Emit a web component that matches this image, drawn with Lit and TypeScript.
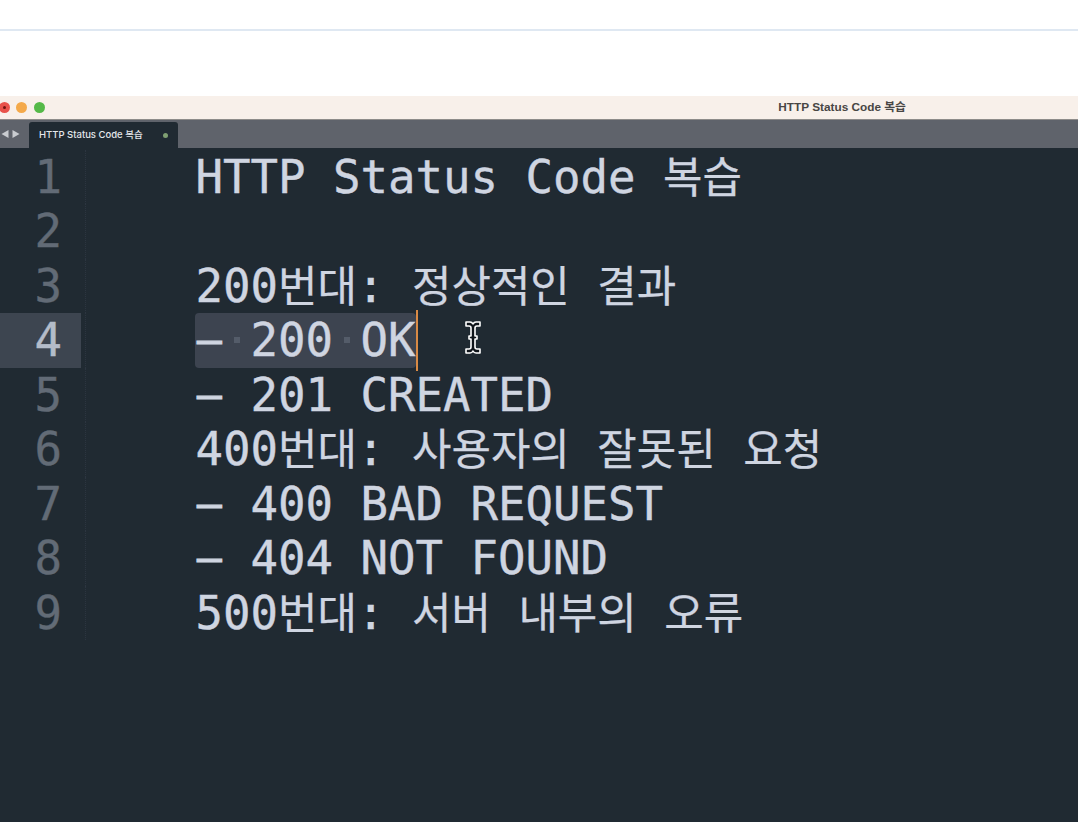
import { LitElement, html, css } from "lit";
import { customElement } from "lit/decorators.js";

const LINES = [
  "HTTP Status Code 복습",
  "",
  "200번대: 정상적인 결과",
  "",
  "– 201 CREATED",
  "400번대: 사용자의 잘못된 요청",
  "– 400 BAD REQUEST",
  "– 404 NOT FOUND",
  "500번대: 서버 내부의 오류",
];

const dash = html`<span class="dash">–</span>`;

function styled(text: string) {
  const isList = text.startsWith("– ");
  const body = isList ? text.slice(1) : text;
  return html`${isList ? dash : ""}${body.split(/([\uac00-\ud7a3]+)/).map((part, i) =>
    i % 2 ? html`<span class="ko">${part}</span>` : part
  )}`;
}

@customElement("app-root")
export class AppRoot extends LitElement {
  static styles = css`
    :host { display: block; width: 1078px; height: 822px; overflow: hidden; background: #fff; position: relative; }
    .topbar { height: 29px; border-bottom: 2px solid #dfe8f2; }
    .gap { height: 65px; }
    .title { height: 24px; background: #f8f0ea; display: flex; align-items: center; border-bottom: 1px solid #8e8c8a; box-sizing: border-box; }
    .light { width: 11px; height: 11px; border-radius: 50%; flex: none; margin-right: 6.6px; }
    .red { background: #e8524a; margin-left: -1.5px; display: flex; align-items: center; justify-content: center; }
    .red::after { content: ""; width: 3px; height: 3px; border-radius: 50%; background: #6e1410; }
    .orange { background: #f4a94a; }
    .green { background: #55b948; }
    .name { margin-left: 727px; font: 700 11.8px/1 "Liberation Sans", "Noto Sans CJK KR", sans-serif; color: #484644; white-space: nowrap; }
    .tabs { height: 28px; background: #5f636b; display: flex; align-items: flex-end; }
    .arrows { width: 29px; height: 100%; display: flex; align-items: center; gap: 3px; padding-left: 1px; box-sizing: border-box; }
    .tab { width: 149px; height: 26px; background: #202a32; border-radius: 3px 3px 0 0; display: flex; align-items: center; box-sizing: border-box; padding: 0 10px; color: #e4e7eb; font: 500 9.5px/1 Inter, "Noto Sans CJK KR", sans-serif; white-space: nowrap; }
    .dot { width: 5px; height: 5px; border-radius: 50%; background: #7f9f72; margin-left: auto; }
    .editor { height: 674px; background: #202a32; padding-top: 1.5px; box-sizing: border-box; font: 45.7px/56px "DejaVu Sans Mono", monospace; color: #cfd5e1; -webkit-text-stroke: 0.4px currentColor; }
    .row { height: 54.5px; display: flex; white-space: pre; }
    .num { width: 81px; padding-right: 19px; box-sizing: border-box; text-align: right; color: #626b76; flex: none; }
    .row.active .num { background: #3d4550; color: #b4bcc9; }
    .text { margin-left: 4px; border-left: 1px dotted #2c3540; padding-left: 109.5px; flex: 1; }
    .ko { font-family: "Noto Sans CJK KR", sans-serif; font-size: 42.9px; line-height: 1px; font-weight: 400; -webkit-text-stroke: 0.25px currentColor; }
    .dash { display: inline-block; width: 27.5px; font-size: 41px; line-height: 1px; text-align: center; vertical-align: 2px; -webkit-text-stroke: 1.2px currentColor; }
    .sel { display: inline-block; position: relative; height: 55px; background: #3d4450; border-radius: 4px; margin-left: -0.5px; padding-left: 0.5px; }
    .sel::after { content: ""; position: absolute; right: -2px; top: -3px; bottom: -3px; width: 2px; background: #d98a45; }
    .sp { display: inline-flex; width: 27.5px; height: 54.5px; justify-content: center; align-items: center; vertical-align: top; }
    .sp::after { content: ""; width: 6px; height: 6px; background: #545c69; }
    .cursor { position: absolute; left: 463px; top: 320px; }
  `;

  render() {
    return html`
      <div class="topbar"></div>
      <div class="gap"></div>
      <div class="title">
        <span class="light red"></span><span class="light orange"></span><span class="light green"></span>
        <span class="name">HTTP Status Code 복습</span>
      </div>
      <div class="tabs">
        <div class="arrows">
          <svg width="8" height="10" viewBox="0 0 8 10"><path d="M7.5 1v8L.5 5z" fill="#c9ccd0"/></svg>
          <svg width="8" height="10" viewBox="0 0 8 10"><path d="M.5 1v8l7-4z" fill="#c9ccd0"/></svg>
        </div>
        <div class="tab"><span>HTTP Status Code 복습</span><span class="dot"></span></div>
      </div>
      <div class="editor">
        ${LINES.map((line, i) => html`
          <div class="row ${i === 3 ? "active" : ""}">
            <div class="num">${i + 1}</div>
            <div class="text">${i === 3
              ? html`<span class="sel">${dash}<span class="sp"> </span>200<span class="sp"> </span>OK</span>`
              : styled(line)}</div>
          </div>`)}
      </div>
      <svg class="cursor" width="20" height="36" viewBox="0 0 20 36" fill="none">
        <path d="M3 2h4c1.500 0 2.500 1 3 2 .5-1 1.500-2 3-2h4v4h-3c-1.500 0-2 .5-2 2v8h2v3h-2v8c0 1.500.5 2 2 2h3v4h-4c-1.500 0-2.500-1-3-2-.5 1-1.500 2-3 2H3v-4h3c1.500 0 2-.5 2-2v-8H6v-3h2V8c0-1.500-.5-2-2-2H3z" fill="#10151b" stroke="#fff" stroke-width="1.600" stroke-linejoin="round"/>
      </svg>
    `;
  }
}
